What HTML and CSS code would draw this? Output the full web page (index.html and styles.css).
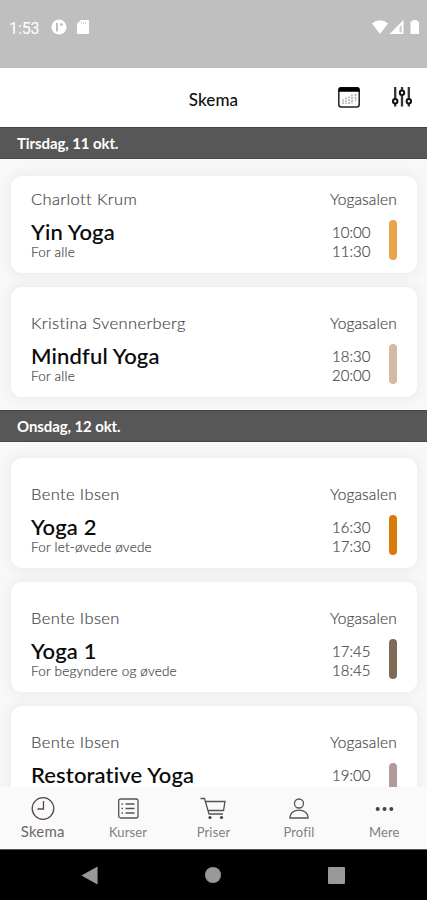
FILE: index.html
```html
<!DOCTYPE html>
<html lang="da">
<head>
<meta charset="utf-8">
<title>Skema</title>
<link rel="stylesheet" href="styles.css">
</head>
<body>
<div class="phone">
  <div class="status">
    <span class="clock">1:53</span>
    <svg class="s-app" width="16" height="16" viewBox="0 0 16 16"><circle cx="8" cy="8" r="7.5" fill="#fff"/><path d="M6 4v8.500" fill="none" stroke="#bfbfbf" stroke-width="2"/><path d="M9 4.200h1.500q1.300 0 1.300 1.300T10.500 6.800H9z" fill="#bfbfbf"/></svg>
    <svg class="s-sd" width="12" height="14" viewBox="0 0 12 14"><path d="M4 0h7a1 1 0 0 1 1 1v12a1 1 0 0 1-1 1H1a1 1 0 0 1-1-1V4z" fill="#fff"/><path d="M4.500 2v2M6.500 2v2M8.500 2v2" stroke="#ccc" stroke-width=".8"/></svg>
    <span class="grow"></span>
    <svg width="48" height="14" viewBox="0 0 48 14"><path d="M0 3.500Q8 -3 16 3.500L8 14z" fill="#fff"/><path d="M17.500 14L31.500 0v14z" fill="#fff"/><path d="M27.500 7v5.500h2.200V4.800z" fill="#bfbfbf" opacity=".8"/><path d="M38.500 1.500h2V0h4.500v1.500h2V14h-8.500z" fill="#fff"/></svg>
  </div>
  <header class="top">
    <h1>Skema</h1>
    <svg class="cal" width="22" height="21" viewBox="0 0 22 21"><rect x=".8" y=".8" width="20.400" height="19.200" rx="2.500" fill="#fff" stroke="#222" stroke-width="1.500"/><path d="M.5 4.800V2.500Q.5 .3 3 .3h16q2.500 0 2.500 2.200v2.300z" fill="#000"/><path d="M5 12.500V17M8 10.500V17M11 9.500V17M14 7.500V16.500M17.500 7V14" stroke="#aaa" stroke-width="1.500" stroke-dasharray="2 .7"/></svg>
    <svg class="tune" width="20" height="20" viewBox="0 0 20 20"><path d="M3.200 0v11.500M3.200 17v2.500M10 0v3M10 8.500v11M16.800 0v11.500M16.800 17v2.500" stroke="#333" stroke-width="2.300"/><g fill="#fff" stroke="#111" stroke-width="2"><circle cx="3.200" cy="14.200" r="2.200"/><circle cx="10" cy="5.700" r="2.200"/><circle cx="16.800" cy="14.200" r="2.200"/></g></svg>
  </header>
  <main>
    <h2>Tirsdag, 11 okt.</h2>
    <section>
      <article class="card first"><div class="row"><span class="who">Charlott Krum</span><span class="room">Yogasalen</span></div><div class="row body"><div class="grow"><h3>Yin Yoga</h3><p>For alle</p></div><div class="time">10:00<br>11:30</div><i class="bar amber"></i></div></article>
      <article class="card"><div class="row"><span class="who">Kristina Svennerberg</span><span class="room">Yogasalen</span></div><div class="row body"><div class="grow"><h3>Mindful Yoga</h3><p>For alle</p></div><div class="time">18:30<br>20:00</div><i class="bar sand"></i></div></article>
    </section>
    <h2>Onsdag, 12 okt.</h2>
    <section>
      <article class="card"><div class="row"><span class="who">Bente Ibsen</span><span class="room">Yogasalen</span></div><div class="row body"><div class="grow"><h3>Yoga 2</h3><p>For let-øvede øvede</p></div><div class="time">16:30<br>17:30</div><i class="bar orange"></i></div></article>
      <article class="card"><div class="row"><span class="who">Bente Ibsen</span><span class="room">Yogasalen</span></div><div class="row body"><div class="grow"><h3>Yoga 1</h3><p>For begyndere og øvede</p></div><div class="time">17:45<br>18:45</div><i class="bar brown"></i></div></article>
      <article class="card"><div class="row"><span class="who">Bente Ibsen</span><span class="room">Yogasalen</span></div><div class="row body"><div class="grow"><h3>Restorative Yoga</h3></div><div class="time">19:00</div><i class="bar rose"></i></div></article>
    </section>
  </main>
  <nav class="tabs">
    <div class="tab active"><svg width="24" height="24" viewBox="0 0 24 24"><circle cx="12" cy="12.500" r="10.800"/><path d="M12.500 5V13H6.500"/></svg><span>Skema</span></div>
    <div class="tab"><svg width="24" height="24" viewBox="0 0 24 24"><rect x="2.700" y="3" width="19.300" height="19" rx="2"/><path d="M9.500 8h9M9.500 12.500h9M9.500 17h9M5.500 8h1.500M5.500 12.500h1.500M5.500 17h1.500"/></svg><span>Kurser</span></div>
    <div class="tab"><svg width="26" height="24" viewBox="0 0 26 24"><path d="M.5 2.500h4L9 18H23M5.500 5.500H25l-1.500 9H8"/><g class="dots"><circle cx="10" cy="21.500" r="1.600"/><circle cx="21.500" cy="21.500" r="1.600"/></g></svg><span>Priser</span></div>
    <div class="tab"><svg width="24" height="24" viewBox="0 0 24 24"><circle cx="12" cy="7.500" r="4.500"/><path d="M3 22C3 11.500 21 11.500 21 22z"/></svg><span>Profil</span></div>
    <div class="tab"><svg width="24" height="24" viewBox="0 0 24 24"><g class="dots"><circle cx="5.700" cy="13" r="2"/><circle cx="12.500" cy="13" r="2"/><circle cx="19.300" cy="13" r="2"/></g></svg><span>Mere</span></div>
  </nav>
  <div class="system">
    <svg width="17" height="19" viewBox="0 0 17 20"><path d="M0 10L17 .5v19z"/></svg>
    <svg width="16" height="16" viewBox="0 0 16 16"><circle cx="8" cy="8" r="8"/></svg>
    <svg width="17" height="17" viewBox="0 0 17 17"><rect width="17" height="17" rx="1"/></svg>
  </div>
</div>
</body>
</html>
```
FILE: styles.css
```css
* { box-sizing: border-box; margin: 0; padding: 0; }
body { font-family: Lato, "Liberation Sans", sans-serif; color: #484848; background: #f8f8f8; }
svg { display: block; flex: none; }
.phone { width: 427px; height: 900px; display: flex; flex-direction: column; overflow: hidden; }
.grow { flex: 1; }
.status { flex: none; height: 68px; background: #bfbfbf; color: #fff; display: flex; align-items: flex-start; padding: 20px 7px 0 9px; }
.clock { font: 400 16px/17px Roboto, sans-serif; letter-spacing: -.1px; width: 42px; }
.s-sd { margin-left: 10px; }
.s-app { margin-top: -1px; }
.top { flex: none; height: 59px; background: #fff; display: grid; grid-template-columns: 1fr auto 1fr; position: relative; align-items: center; padding-top: 4px; }
.top h1 { grid-column: 2; font-size: 17px; font-weight: 500; letter-spacing: .1px; color: #111; }
.top .cal { position: absolute; left: 338px; top: 19px; }
.top .tune { position: absolute; left: 392px; top: 19px; }
main { flex: none; height: 660px; overflow: hidden; background: #f8f8f8; }
h2 { height: 32px; background: #575757; border-top: 1px solid #444; border-bottom: 1px solid #484848; color: #fff; font-size: 15px; font-weight: 700; letter-spacing: -.1px; line-height: 31px; padding-left: 17px; }
section { display: flex; flex-direction: column; gap: 14px; padding: 17px 10px 13px 11px; }
section:last-child { padding-top: 16.400px; gap: 13.700px; }
.card { height: 110px; border-radius: 11px; background: #fff; box-shadow: 0 0 13px 2px rgba(0,0,0,.055); padding: 25px 20px 0; }
.card.first { height: 97px; padding-top: 12px; }
.row { display: flex; justify-content: space-between; align-items: center; }
.who, .room, .time, p { font-weight: 300; -webkit-text-stroke: .2px currentColor; }
.who { font-size: 16.500px; line-height: 22px; letter-spacing: .38px; }
.room { font-size: 15.500px; line-height: 22px; letter-spacing: .15px; }
.body { align-items: flex-start; padding-top: 10px; }
h3 { font-size: 22px; font-weight: 500; color: #080808; line-height: 25px; letter-spacing: .16px; -webkit-text-stroke: .1px #080808; white-space: nowrap; margin-top: -1px; }
p { font-size: 13.500px; line-height: 15px; letter-spacing: .2px; margin-top: 1px; }
.time { font-size: 15px; line-height: 18.500px; padding-top: 3px; text-align: right; }
.bar { width: 8px; height: 40px; border-radius: 4px; margin-left: 18.500px; }
.amber { background: #e9a548; }
.sand { background: #d5b8a6; }
.orange { background: #d97b0c; }
.brown { background: #806957; }
.rose { background: #b4999b; }
.tabs { flex: none; height: 62px; background: #fafafa; display: grid; grid-template-columns: repeat(5, 1fr); }
.tab { display: flex; flex-direction: column; align-items: center; padding-top: 9px; font-size: 13px; line-height: 18px; letter-spacing: .15px; color: #808080; }
.tab span { margin-top: 3px; }
.tab svg { fill: none; stroke: #555; stroke-width: 1.300; }
.tab.active { font-size: 15px; color: #706868; }
.tab.active span { margin-top: 2px; }
.tab.active svg { stroke: #5a4646; }
.tab .dots { fill: #444; stroke: none; }
.system { flex: none; height: 51px; background: #000; border-top: 1px solid #555; display: flex; align-items: center; justify-content: space-between; padding: 0 82px 0 81px; }
.system svg { fill: #999; }
```
